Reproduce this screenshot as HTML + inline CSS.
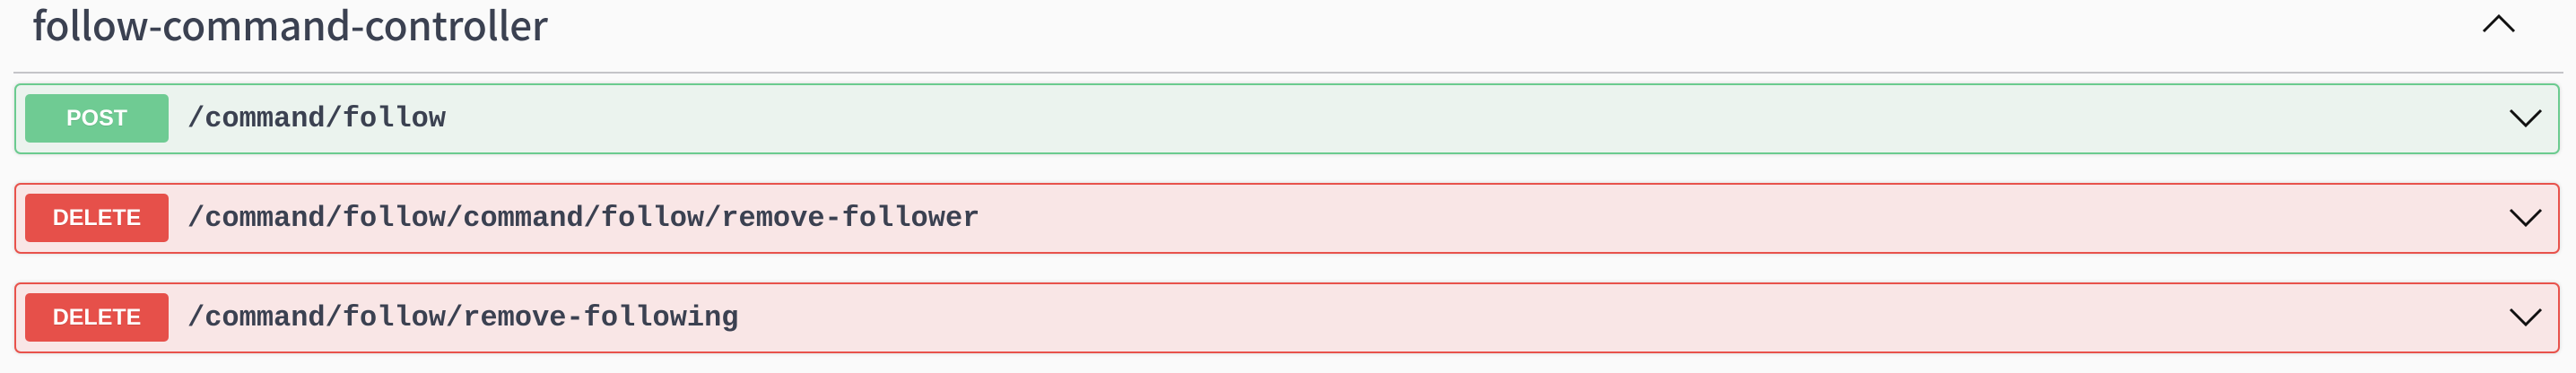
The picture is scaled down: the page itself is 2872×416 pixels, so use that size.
<!DOCTYPE html>
<html><head><style>
body{margin:0;width:2872px;height:416px;background:#fafafa;font-family:"Liberation Sans",sans-serif;position:relative;overflow:hidden}
.title{position:absolute;left:36px;top:-4px;font-family:"Noto Sans CJK KR","Liberation Sans",sans-serif;font-weight:500;font-size:44px;letter-spacing:-0.3px;color:#3b4151;line-height:60px}
.hr{position:absolute;left:15px;top:80px;width:2843px;height:2px;background:#c4c4c8}
.op{position:absolute;left:16px;width:2834px;height:75px;border:2px solid;border-radius:7px;box-shadow:0 0 4px rgba(0,0,0,.15)}
.post{background:#ebf3ee;border-color:#6bcb8f}
.del{background:#f9e6e6;border-color:#e8524b}
.badge{position:absolute;left:10px;top:10px;width:160px;height:54px;border-radius:5px;color:#fff;font-weight:bold;font-size:25px;text-align:center;line-height:54px;text-shadow:0 1px 0 rgba(0,0,0,.1)}
.post .badge{background:#6fcb93}
.del .badge{background:#e6504a}
.path{position:absolute;left:191px;top:0;line-height:75px;font-family:"Liberation Mono","DejaVu Sans Mono",monospace;font-weight:bold;font-size:32px;color:#3b4151}
svg{position:absolute}
</style></head><body>
<div class="title">follow-command-controller</div>
<svg style="left:2766px;top:14px" width="40" height="24"><path d="M3 21L20 4L37 21" fill="none" stroke="#111" stroke-width="3"/></svg>
<div class="hr"></div>
<div class="op post" style="top:93px"><div class="badge">POST</div><div class="path">/command/follow</div>
<svg style="left:2778px;top:25px" width="40" height="24"><path d="M3 3L20 20L37 3" fill="none" stroke="#111" stroke-width="3"/></svg></div>
<div class="op del" style="top:204px"><div class="badge">DELETE</div><div class="path">/command/follow/command/follow/remove-follower</div>
<svg style="left:2778px;top:25px" width="40" height="24"><path d="M3 3L20 20L37 3" fill="none" stroke="#111" stroke-width="3"/></svg></div>
<div class="op del" style="top:315px"><div class="badge">DELETE</div><div class="path">/command/follow/remove-following</div>
<svg style="left:2778px;top:25px" width="40" height="24"><path d="M3 3L20 20L37 3" fill="none" stroke="#111" stroke-width="3"/></svg></div>
</body></html>
